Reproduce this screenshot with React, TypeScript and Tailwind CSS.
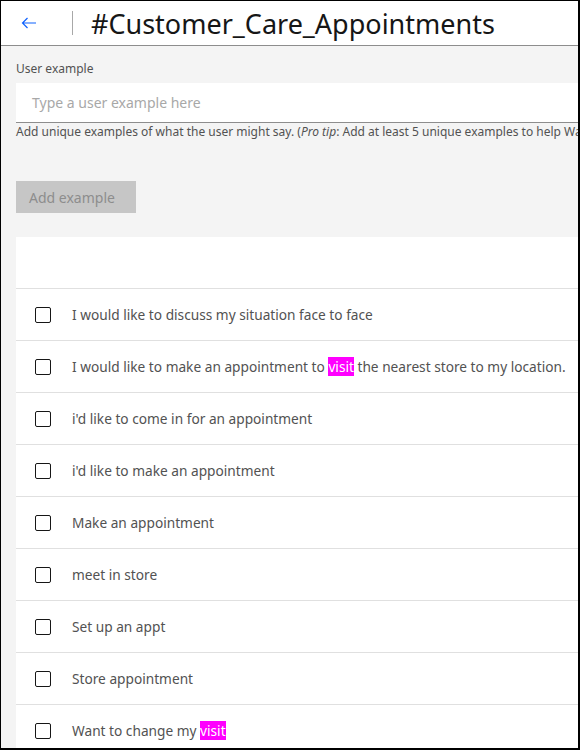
const examples: { text: string; highlight?: string; tail?: string }[] = [
  { text: "I would like to discuss my situation face to face" },
  { text: "I would like to make an appointment to ", highlight: "visit", tail: " the nearest store to my location." },
  { text: "i'd like to come in for an appointment" },
  { text: "i'd like to make an appointment" },
  { text: "Make an appointment" },
  { text: "meet in store" },
  { text: "Set up an appt" },
  { text: "Store appointment" },
  { text: "Want to change my ", highlight: "visit" },
];

export default function App() {
  return (
    <div
      className="h-[750px] w-[580px] overflow-hidden border-t border-l border-r-2 border-b-2 border-black bg-[#f4f4f4]"
      style={{ fontFamily: '"Noto Sans", "Open Sans", sans-serif' }}
    >
      {/* header */}
      <div className="flex h-[45px] items-center border-b border-[#8d8d8d] bg-white">
        <div className="flex w-[56px] pl-[20px]">
          <svg width="16" height="12" viewBox="0 0 16 12" fill="none">
            <path d="M15 6H1.5M6.5 1L1.5 6l5 5" stroke="#0f62fe" strokeWidth="1.2" />
          </svg>
        </div>
        <div className="ml-[15px] h-[24px] w-px bg-[#a8a8a8]" />
        <h1 className="ml-[18px] text-[27px] leading-none text-[#161616] whitespace-nowrap">
          #Customer_Care_Appointments
        </h1>
      </div>

      {/* form */}
      <div className="w-[760px] pl-[15px] pt-[15px]">
        <label className="block text-[12px] leading-[16px] text-[#525252]">User example</label>
        <div className="mt-[6px] flex h-[40px] items-center border-b border-[#8d8d8d] bg-white px-[16px] text-[14px] text-[#a8a8a8]">
          Type a user example here
        </div>
        <p className="mt-[1px] whitespace-nowrap text-[12px] leading-[16px] text-[#525252]">
          Add unique examples of what the user might say. (<em>Pro tip</em>: Add at least 5 unique examples to help Watson understand.)
        </p>

        <button className="mt-[41px] flex h-[32px] w-[120px] items-center bg-[#c6c6c6] px-[13px] text-[14px] text-[#8d8d8d]">
          Add example
        </button>

        <div className="mt-[24px] bg-white">
          <div className="h-[52px] border-b border-[#e0e0e0]" />
          {examples.map((ex, i) => (
            <div key={i} className="flex h-[52px] items-center border-b border-[#e0e0e0]">
              <div className="ml-[19px] h-[16px] w-[16px] rounded-[2px] border border-[#161616]" />
              <span className="ml-[21px] whitespace-nowrap pt-[2px] text-[13.7px] text-[#525252]">
                {ex.text}
                {ex.highlight && <span className="bg-[#ff00ff] text-white">{ex.highlight}</span>}
                {ex.tail}
              </span>
            </div>
          ))}
        </div>
      </div>
    </div>
  );
}
